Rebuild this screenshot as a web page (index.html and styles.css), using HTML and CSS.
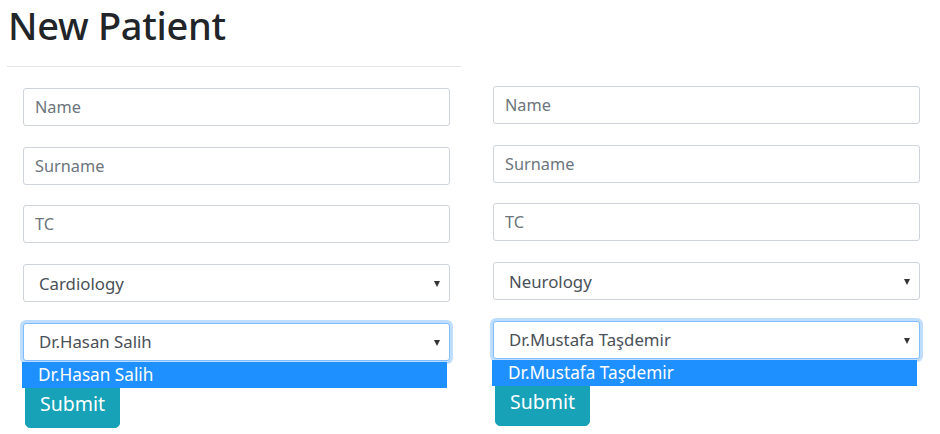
FILE: index.html
```html
<!DOCTYPE html>
<html lang="tr">
<head>
<meta charset="utf-8">
<title>New Patient</title>
<link rel="stylesheet" href="styles.css">
</head>
<body>
<div class="page">
  <div class="col col-left">
    <div class="header">
      <h1 class="title">New Patient</h1>
      <hr class="rule">
    </div>
    <form class="patient-form">
      <input class="field" type="text" placeholder="Name">
      <input class="field" type="text" placeholder="Surname">
      <input class="field" type="text" placeholder="TC">
      <div class="select-wrap">
        <select class="field select"><option>Cardiology</option></select>
        <span class="caret"></span>
      </div>
      <div class="select-wrap">
        <select class="field select focused"><option>Dr.Hasan Salih</option></select>
        <span class="caret"></span>
        <div class="popup"><div class="popup-option">Dr.Hasan Salih</div></div>
      </div>
      <div class="actions"><button type="button" class="btn">Submit</button></div>
    </form>
  </div>
  <div class="col col-right">
    <form class="patient-form">
      <input class="field" type="text" placeholder="Name">
      <input class="field" type="text" placeholder="Surname">
      <input class="field" type="text" placeholder="TC">
      <div class="select-wrap">
        <select class="field select"><option>Neurology</option></select>
        <span class="caret"></span>
      </div>
      <div class="select-wrap">
        <select class="field select focused"><option>Dr.Mustafa Taşdemir</option></select>
        <span class="caret"></span>
        <div class="popup"><div class="popup-option">Dr.Mustafa Taşdemir</div></div>
      </div>
      <div class="actions"><button type="button" class="btn">Submit</button></div>
    </form>
  </div>
</div>
</body>
</html>
```
FILE: styles.css
```css
* { box-sizing: border-box; }
html, body {
  margin: 0;
  padding: 0;
  background: #fff;
}
body {
  font-family: "Noto Sans", "Open Sans", sans-serif;
  color: #212529;
  width: 940px;
  height: 434px;
  overflow: hidden;
}
.page {
  display: flex;
  align-items: flex-start;
}
.col {
  width: 470px;
  flex: 0 0 470px;
}
.header {
  padding-left: 7px;
  padding-top: 2px;
  width: 461px;
}
.title {
  margin: 0 0 0 1px;
  font-size: 38px;
  line-height: 46px;
  font-weight: 500;
  color: #212529;
  letter-spacing: -0.3px;
}
.rule {
  margin: 18px 0 0 0;
  border: 0;
  border-top: 1px solid #e5e5e5;
  height: 0;
}
.patient-form {
  display: flex;
  flex-direction: column;
  gap: 20.7px;
  padding-left: 23px;
  padding-right: 20px;
}
.col-left .patient-form { margin-top: 21px; }
.col-right .patient-form { margin-top: 86px; }
.field {
  display: block;
  width: 427px;
  height: 38px;
  margin: 0;
  border: 1px solid #ced4da;
  border-radius: 3px;
  background: #fff;
  font-family: "Noto Sans", "Open Sans", sans-serif;
  font-size: 16.3px;
  color: #495057;
  padding: 0 11px;
  outline: none;
}
.field::placeholder { color: #6c757d; opacity: 1; }
.select-wrap {
  position: relative;
  width: 427px;
}
.select {
  appearance: none;
  -webkit-appearance: none;
  padding-left: 15px;
  font-size: 16.8px;
}
.select.focused {
  border-color: #80bdff;
  box-shadow: 0 0 0 3px rgba(0, 123, 255, 0.25);
}
.caret {
  position: absolute;
  right: 10px;
  top: 17px;
  width: 0;
  height: 0;
  border-left: 3.5px solid transparent;
  border-right: 3.5px solid transparent;
  border-top: 6px solid #333;
}
.popup {
  position: absolute;
  left: -1px;
  top: 39px;
  width: 425px;
  height: 26px;
  background: #1e90ff;
  z-index: 5;
}
.popup-option {
  color: #fff;
  font-size: 17.2px;
  line-height: 26px;
  padding-left: 16px;
}
.actions {
  display: flex;
}
.btn {
  margin-left: 2px;
  height: 47px;
  width: 95px;
  border: 1px solid #17a2b8;
  border-radius: 5px;
  background: #17a2b8;
  color: #fff;
  font-family: "Noto Sans", "Open Sans", sans-serif;
  font-size: 19.5px;
  line-height: 43px;
  padding: 0 0 2px 0;
  cursor: pointer;
}
```
